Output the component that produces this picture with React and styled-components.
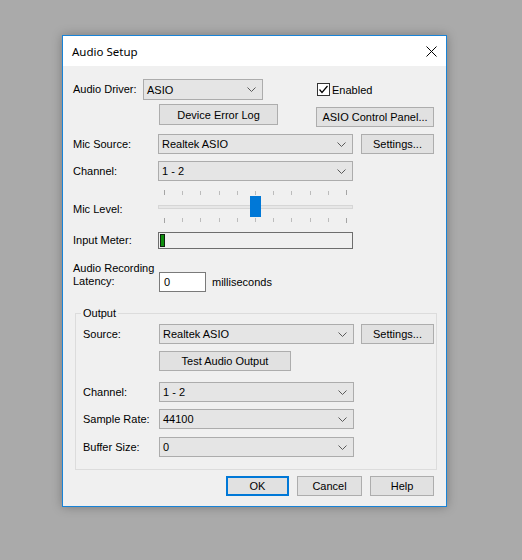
import styled, { createGlobalStyle } from "styled-components";

const GlobalStyle = createGlobalStyle`
  html, body {
    margin: 0;
    padding: 0;
    background: #aaaaaa;
  }
  body {
    font-family: "Liberation Sans", Arial, sans-serif;
    font-size: 11px;
    color: #000;
  }
`;

const Page = styled.div`
  width: 522px;
  height: 560px;
  box-sizing: border-box;
  padding: 35px 0 0 62px;
`;

const Window = styled.div`
  width: 385px;
  height: 472px;
  box-sizing: border-box;
  border: 1px solid #1883d7;
  background: #f0f0f0;
  box-shadow: 0 0 10px rgba(0, 0, 0, 0.28);
  display: flex;
  flex-direction: column;
`;

const TitleBar = styled.div`
  height: 30px;
  flex: none;
  background: #fff;
  display: flex;
  align-items: center;
  justify-content: space-between;
  padding: 0 9px;
  font-family: "Segoe UI", "Noto Sans", sans-serif;
  font-size: 11.5px;
`;

const Body = styled.div`
  padding: 13px 12px 0 10px;
  display: flex;
  flex-direction: column;
`;

const Row = styled.div`
  display: flex;
  align-items: ${(p) => p.$align || "center"};
  height: ${(p) => p.$h || 20}px;
  margin-top: ${(p) => p.$mt || 0}px;
`;

const Label = styled.div`
  width: ${(p) => p.$w || 85}px;
  flex: none;
  line-height: 13px;
  padding-top: ${(p) => p.$pt || 0}px;
  margin-bottom: ${(p) => p.$mb || 0}px;
`;

const SelectBox = styled.div`
  width: ${(p) => p.$w || 195}px;
  height: ${(p) => p.$h || 20}px;
  flex: none;
  box-sizing: border-box;
  border: 1px solid #acacac;
  background: #e5e5e5;
  display: flex;
  align-items: center;
  justify-content: space-between;
  padding: 0 6px 0 3px;
`;

const Button = styled.button`
  width: ${(p) => p.$w}px;
  height: ${(p) => p.$h || 20}px;
  margin-left: ${(p) => p.$ml || 0}px;
  margin-top: ${(p) => p.$mt || 0}px;
  flex: none;
  box-sizing: border-box;
  border: ${(p) => (p.$default ? "2px solid #0078d7" : "1px solid #adadad")};
  background: #e1e1e1;
  font-family: inherit;
  font-size: 11px;
  color: #000;
  padding: 0;
`;

const CheckWrap = styled.div`
  display: flex;
  align-items: center;
  gap: 2px;
  margin-left: ${(p) => p.$ml || 0}px;
`;

const Slider = styled.div`
  position: relative;
  width: 195px;
  height: 36px;
  flex: none;
  display: flex;
  flex-direction: column;
`;

const TickRow = styled.div`
  display: flex;
  justify-content: space-between;
  align-items: ${(p) => (p.$bottom ? "flex-start" : "flex-end")};
  padding: 0 6px;
  height: 5px;
  margin-top: ${(p) => p.$mt}px;
`;

const Tick = styled.span`
  width: 1px;
  height: ${(p) => (p.$edge ? 5 : 4)}px;
  background: ${(p) => (p.$edge ? "#a4a4a4" : "#bcbcbc")};
`;

const Track = styled.div`
  margin-top: 10px;
  height: 4px;
  box-sizing: border-box;
  border: 1px solid #d6d6d6;
  background: #e7e7e7;
`;

const Thumb = styled.div`
  position: absolute;
  top: 8px;
  width: 11px;
  height: 21px;
  background: #0078d7;
`;

const Meter = styled.div`
  width: 195px;
  height: 17px;
  flex: none;
  box-sizing: border-box;
  border: 1px solid #6d6d6d;
  padding: 1px;
  display: flex;
`;

const MeterBar = styled.div`
  box-sizing: border-box;
  border: 1px solid #102010;
  background: #0f8f0f;
`;

const TextInput = styled.div`
  width: 47px;
  height: 20px;
  margin-left: 1px;
  flex: none;
  box-sizing: border-box;
  border: 1px solid #7a7a7a;
  background: #fff;
  display: flex;
  align-items: center;
  padding-left: 4px;
`;

const Unit = styled.span`
  margin-left: 6px;
  line-height: 20px;
`;

const Group = styled.fieldset`
  margin: 14px 0 0 2px;
  width: 362px;
  min-width: 0;
  box-sizing: border-box;
  padding: 4px 2px 12px 7px;
  border: 1px solid #dcdcdc;
`;

const Legend = styled.legend`
  padding: 0 2px;
  margin-left: -2px;
  line-height: 14px;
`;

const Footer = styled.div`
  display: flex;
  justify-content: flex-end;
  gap: 8px;
  margin-top: 6px;
`;

const Chevron = () => (
  <svg width="9" height="5" viewBox="0 0 9 5">
    <path d="M0.5 0.5 L4.5 4.5 L8.5 0.5" fill="none" stroke="#5a5a5a" strokeWidth="1" />
  </svg>
);

const Select = ({ value, w }) => (
  <SelectBox $w={w}>
    <span>{value}</span>
    <Chevron />
  </SelectBox>
);

const CloseIcon = () => (
  <svg width="11" height="11" viewBox="0 0 11 11">
    <path d="M0.5 0.5 L10.5 10.5 M10.5 0.5 L0.5 10.5" stroke="#000" strokeWidth="1" />
  </svg>
);

const CheckIcon = () => (
  <svg width="13" height="13" viewBox="0 0 13 13">
    <rect x="0.5" y="0.5" width="12" height="12" fill="#fff" stroke="#333" />
    <path d="M2.5 6.5 L5 9.5 L10.5 3" fill="none" stroke="#000" strokeWidth="1.2" />
  </svg>
);

const MicLevel = ({ value, max }) => {
  const ticks = Array.from({ length: max + 1 }, (_, i) => i);
  const left = 6 + (182 * value) / max - 5;
  return (
    <Slider>
      <TickRow $mt={2}>
        {ticks.map((t) => (
          <Tick key={t} $edge={t === 0 || t === max} />
        ))}
      </TickRow>
      <Track />
      <TickRow $mt={9} $bottom>
        {ticks.map((t) => (
          <Tick key={t} $edge={t === 0 || t === max} />
        ))}
      </TickRow>
      <Thumb style={{ left }} />
    </Slider>
  );
};

export default function App() {
  return (
    <>
      <GlobalStyle />
      <Page>
        <Window>
          <TitleBar>
            <span>Audio Setup</span>
            <CloseIcon />
          </TitleBar>
          <Body>
            <Row $h={21}>
              <Label $w={70}>Audio Driver:</Label>
              <SelectBox $w={120} $h={21}>
                <span>ASIO</span>
                <Chevron />
              </SelectBox>
              <CheckWrap $ml={54}>
                <CheckIcon />
                <span>Enabled</span>
              </CheckWrap>
            </Row>
            <Row $h={23} $mt={4} $align="flex-start">
              <Button $w={119} $h={21} $ml={86}>Device Error Log</Button>
              <Button $w={118} $ml={38} $mt={3}>ASIO Control Panel...</Button>
            </Row>
            <Row $mt={7}>
              <Label>Mic Source:</Label>
              <Select value="Realtek ASIO" />
              <Button $w={73} $ml={8}>Settings...</Button>
            </Row>
            <Row $mt={7}>
              <Label>Channel:</Label>
              <Select value="1 - 2" />
            </Row>
            <Row $h={36} $mt={7}>
              <Label $pt={6}>Mic Level:</Label>
              <MicLevel value={5} max={10} />
            </Row>
            <Row $h={17} $mt={8}>
              <Label>Input Meter:</Label>
              <Meter>
                <MeterBar style={{ width: 5 }} />
              </Meter>
            </Row>
            <Row $h={30} $mt={13} $align="flex-end">
              <Label $mb={4}>
                Audio Recording
                <br />
                Latency:
              </Label>
              <TextInput>0</TextInput>
              <Unit>milliseconds</Unit>
            </Row>
            <Group>
              <Legend>Output</Legend>
              <Row>
                <Label $w={76}>Source:</Label>
                <Select value="Realtek ASIO" />
                <Button $w={73} $ml={7}>Settings...</Button>
              </Row>
              <Row $mt={7}>
                <Button $w={132} $ml={76}>Test Audio Output</Button>
              </Row>
              <Row $mt={11}>
                <Label $w={76}>Channel:</Label>
                <Select value="1 - 2" />
              </Row>
              <Row $mt={7}>
                <Label $w={76}>Sample Rate:</Label>
                <Select value="44100" />
              </Row>
              <Row $mt={8}>
                <Label $w={76}>Buffer Size:</Label>
                <Select value="0" />
              </Row>
            </Group>
            <Footer>
              <Button $w={63} $default>OK</Button>
              <Button $w={65}>Cancel</Button>
              <Button $w={64}>Help</Button>
            </Footer>
          </Body>
        </Window>
      </Page>
    </>
  );
}
